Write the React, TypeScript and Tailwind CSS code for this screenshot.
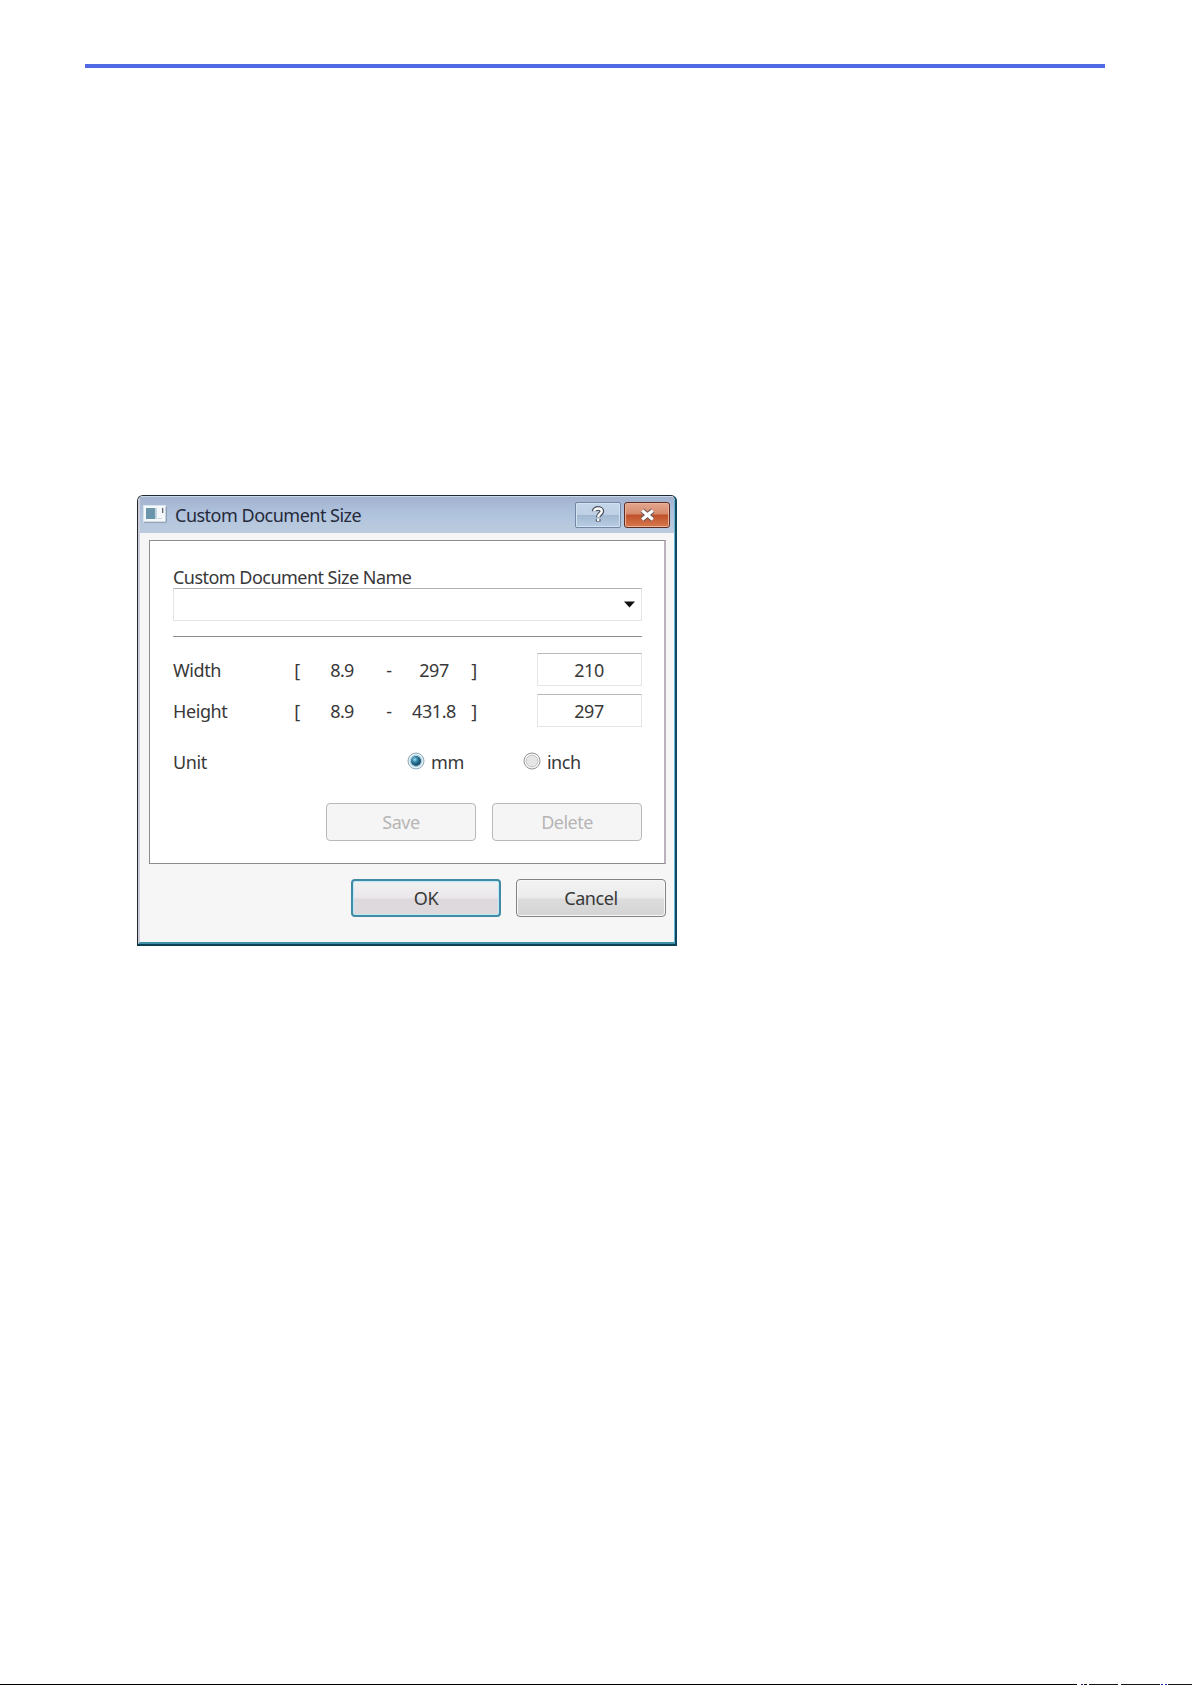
import React from 'react';
import clsx from 'clsx';

const RANGES = [
  { label: 'Width', min: '8.9', max: '297', value: '210' },
  { label: 'Height', min: '8.9', max: '431.8', value: '297' },
];

const TitleBar: React.FC = () => (
  <div className="flex h-[37px] shrink-0 items-start bg-linear-to-b from-[#a3b2ce] via-[#b0c4de] to-[#bdcbdd] border-t border-[#c9d8e6] pl-[3px] pr-[4px]">
    <svg className="mt-[8px] h-[18px] w-[24px]" viewBox="0 0 24 18">
      <rect x="0.5" y="0.5" width="22" height="16.5" fill="#f5f8fa" stroke="#d9e3eb" />
      <path d="M1 17.3H23.3V2" fill="none" stroke="#8797a8" />
      <rect x="3" y="3" width="9" height="11" fill="#6b95aa" />
      <rect x="12" y="3" width="2" height="11" fill="#c4d4e0" />
      <path d="M19.7 3v5" stroke="#5e6470" strokeWidth="1.3" />
      <path d="M15 13.5h4" stroke="#c9d3dc" />
    </svg>
    <span className="ml-[8px] mt-[3px] text-[18px] leading-[30px] tracking-[-0.5px] text-[#25293a]">Custom Document Size</span>
    <div className="ml-auto mt-[5px] flex gap-[3px]">
      <button className="flex h-[26px] w-[46px] items-center justify-center rounded-[2px] border border-[#7286a5] bg-[linear-gradient(#c5d6e9_0%,#bed0e6_48%,#a2b8d1_50%,#b9cee3_100%)] shadow-[inset_0_0_0_1px_#d5e3f1]">
        <svg width="14" height="18" viewBox="0 0 14 18" fill="none">
          <path d="M3.2 5.2C3.2 1.6 10.8 1.6 10.8 5.2C10.8 8 7.2 7.6 7.2 11.3M7.2 13.2V15.6" stroke="#4b5362" strokeWidth="4.8" />
          <path d="M3.2 5.2C3.2 1.6 10.8 1.6 10.8 5.2C10.8 8 7.2 7.6 7.2 11.3M7.2 12.8V15" stroke="#fff" strokeWidth="2.3" />
        </svg>
      </button>
      <button className="flex h-[26px] w-[46px] items-center justify-center rounded-[3px] border border-[#612c24] bg-[linear-gradient(#e4a68f_0%,#d78b6c_46%,#bf5029_50%,#d7794d_100%)] shadow-[inset_0_0_0_1px_#e8b39b]">
        <svg width="17" height="14" viewBox="0 0 17 14" fill="none">
          <path d="M3.2 2.5L13.8 11.5M13.8 2.5L3.2 11.5" stroke="#6b5658" strokeWidth="5.2" />
          <path d="M3.2 2.5L13.8 11.5M13.8 2.5L3.2 11.5" stroke="#fff" strokeWidth="3.2" />
        </svg>
      </button>
    </div>
  </div>
);

const Radio: React.FC<{ label: string; checked?: boolean }> = ({ label, checked }) => (
  <label className="flex items-center">
    <svg className="mr-[6px] h-[18px] w-[18px] -translate-y-px" viewBox="0 0 18 18">
      <defs>
        <radialGradient id="dot" cx="0.38" cy="0.35" r="0.7">
          <stop offset="0" stopColor="#9bdcf0" />
          <stop offset="0.45" stopColor="#28779b" />
          <stop offset="1" stopColor="#123e5c" />
        </radialGradient>
      </defs>
      <circle cx="9" cy="9" r="8" fill={checked ? '#e3f1f8' : '#f4f4f4'} stroke={checked ? '#8fa9b8' : '#969696'} />
      <circle cx="9" cy="9" r="5.8" fill={checked ? '#c5e2f1' : '#e6e6e6'} stroke={checked ? '#a9c9da' : '#c8c8c8'} />
      {checked && <circle cx="9" cy="9" r="5" fill="url(#dot)" />}
    </svg>
    {label}
  </label>
);

const Button: React.FC<{ label: string; variant?: 'primary' | 'disabled' }> = ({ label, variant }) => (
  <button
    className={clsx(
      'flex h-[38px] w-[150px] items-center justify-center rounded-[4px]',
      variant === 'disabled' && 'border border-[#b9b9b9] bg-[#f5f5f5] text-[#b5b5b5]',
      variant === 'primary' &&
        'border-2 border-[#438ba4] bg-[linear-gradient(#f2f1f2_0%,#eae8ea_48%,#dcd8dc_55%,#dedadc_100%)] shadow-[inset_0_0_0_1px_#b9eafa]',
      !variant &&
        'border border-[#838383] bg-[linear-gradient(#f3f3f3_0%,#ebebeb_48%,#dcdcdc_54%,#d4d4d4_100%)] shadow-[inset_0_0_0_1px_#f7f7f7]',
    )}
  >
    {label}
  </button>
);

const Dialog: React.FC = () => (
  <div className="ml-[137px] mt-[427px] flex h-[451px] w-[540px] flex-col overflow-hidden rounded-t-[6px] border border-b-2 border-r-2 border-[#202a33] border-b-[#0b4055] border-r-[#10495e] bg-[#f6f6f7]">
    <div className="flex grow flex-col border-b-2 border-l-2 border-r border-b-[#3f8fa5] border-l-[#cfced8] border-r-[#65b6d3]">
      <TitleBar />
      <div className="ml-[9px] mt-[7px] h-[324px] w-[517px] shrink-0 border border-r-2 border-[#8c8c90] border-r-[#bbb0bb] bg-white pl-[23px] pt-[24px]">
        <div className="h-[23px] text-[18px] leading-[24px] tracking-[-0.53px]">Custom Document Size Name</div>
        <div className="flex h-[33px] w-[469px] items-center justify-end border border-[#e3e3e8] border-t-[#b2b2b6] pr-[6px]">
          <svg width="11" height="7" viewBox="0 0 11 7">
            <path d="M0 0.5H11L5.5 6.5Z" fill="#111" />
          </svg>
        </div>
        <div className="mt-[15px] h-px w-[469px] bg-[#8c8c8c]" />
        <div className="mt-[16px] flex flex-col gap-[8px]">
          {RANGES.map((row) => (
            <div key={row.label} className="flex h-[33px] w-[469px] items-center pt-px">
              <span className="w-[120px]">{row.label}</span>
              <span className="w-[8px] text-center">[</span>
              <span className="ml-[23px] w-[36px] text-center tracking-[-0.6px]">{row.min}</span>
              <span className="ml-[23px] w-[12px] text-center">-</span>
              <span className="ml-[14px] w-[50px] text-center">{row.max}</span>
              <span className="ml-[10px] w-[10px] text-center">]</span>
              <div className="-mt-px ml-auto flex h-[33px] w-[105px] items-center justify-center border border-[#e3e3e8] border-t-[#b8b8bc] pt-px pr-px">
                {row.value}
              </div>
            </div>
          ))}
        </div>
        <div className="mt-[22px] flex h-[26px] items-center">
          <span className="w-[234px]">Unit</span>
          <Radio label="mm" checked />
          <span className="w-[59px]" />
          <Radio label="inch" />
        </div>
        <div className="mt-[28px] flex w-[469px] justify-end gap-[16px] tracking-[-0.5px]">
          <Button label="Save" variant="disabled" />
          <Button label="Delete" variant="disabled" />
        </div>
      </div>
      <div className="mr-[8px] mt-[15px] flex justify-end gap-[15px]">
        <Button label="OK" variant="primary" />
        <Button label="Cancel" />
      </div>
    </div>
  </div>
);

export default function App() {
  return (
    <div className="flex h-[1685px] w-[1192px] flex-col overflow-hidden bg-white font-['Noto_Sans','Open_Sans',sans-serif] text-[18px] tracking-[-0.4px] text-[#383838]">
      <div className="ml-[85px] mt-[64px] h-[4px] w-[1020px] shrink-0 bg-[#506be4]" />
      <Dialog />
      <div className="mt-auto flex h-px">
        <div className="w-[1077px] bg-black" />
        <div className="ml-[4px] w-[2px] bg-[#24249a]" />
        <div className="ml-px w-[3px] bg-black" />
        <div className="ml-[2px] w-[29px] bg-[#151515]" />
        <div className="ml-[3px] w-[39px] bg-[#151515]" />
        <div className="ml-px w-[2px] bg-[#24249a]" />
        <div className="ml-[2px] w-[2px] bg-[#24249a]" />
        <div className="ml-px w-[24px] bg-[#151515]" />
      </div>
    </div>
  );
}
